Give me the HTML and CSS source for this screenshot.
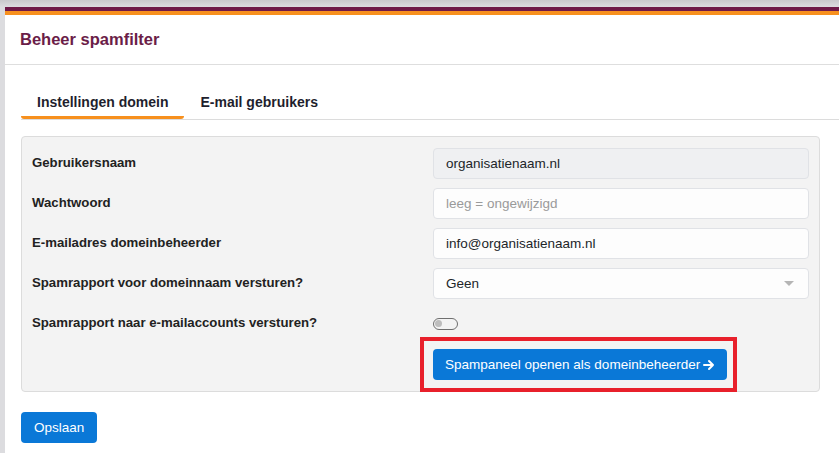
FILE: index.html
```html
<!DOCTYPE html>
<html lang="nl">
<head>
    <meta charset="UTF-8">
    <meta name="viewport" content="width=device-width, initial-scale=1.0">
    <title>Beheer spamfilter</title>
    <link rel="stylesheet" href="styles.css">
</head>
<body>

<div class="topbar"></div>

<div class="page">
    <div class="card">
        <header class="card-header">
            <h1>Beheer spamfilter</h1>
        </header>

        <div class="card-body">
            <ul class="tabs">
                <li class="tab active">Instellingen domein</li>
                <li class="tab">E-mail gebruikers</li>
            </ul>

            <form class="panel">
                <label class="label" for="username">Gebruikersnaam</label>
                <input class="input" id="username" type="text" value="organisatienaam.nl" disabled>

                <label class="label" for="password">Wachtwoord</label>
                <input class="input" id="password" type="password" placeholder="leeg = ongewijzigd">

                <label class="label" for="email">E-mailadres domeinbeheerder</label>
                <input class="input" id="email" type="text" value="info@organisatienaam.nl">

                <label class="label" for="report">Spamrapport voor domeinnaam versturen?</label>
                <div class="select">
                    <span>Geen</span>
                    <span class="caret"></span>
                </div>

                <label class="label" for="accounts">Spamrapport naar e-mailaccounts versturen?</label>
                <div class="toggle-cell">
                    <span class="toggle"><span class="knob"></span></span>
                </div>

                <div></div>
                <div class="button-cell">
                    <span class="highlight">
                        <button type="button" class="btn">
                            Spampaneel openen als domeinbeheerder
                            <svg width="12" height="12" viewBox="0 0 12 12" aria-hidden="true">
                                <path d="M1 6h9M6 2l4 4-4 4" fill="none" stroke="#fff" stroke-width="2" stroke-linecap="round" stroke-linejoin="round"/>
                            </svg>
                        </button>
                    </span>
                </div>
            </form>

            <button type="button" class="btn save">Opslaan</button>
        </div>
    </div>
</div>

</body>
</html>
```

FILE: styles.css
```css
body {
    margin: 0;
    padding: 0;
    background-color: #dcdcdf;
    font-family: "Liberation Sans", Arial, sans-serif;
    color: #212529;
    overflow: hidden;
}

.topbar {
    height: 7px;
    background: linear-gradient(#c9c9cc, #dcdcdf);
}

.page {
    padding-left: 5px;
}

.card {
    background-color: #ffffff;
    border-top: 4px solid #6f1a48;
    min-height: 446px;
}

.card-header {
    border-top: 4px solid #f7901e;
    border-bottom: 1px solid #dedede;
    height: 49px;
    display: flex;
    align-items: center;
    padding-left: 15px;
}

.card-header h1 {
    margin: 0;
    font-size: 16.5px;
    font-weight: bold;
    color: #6b1d48;
}

.card-body {
    padding: 17px 19px 0 16px;
}

/* Tabs */
.tabs {
    list-style: none;
    margin: 0 -19px 0 0;
    padding: 0;
    display: flex;
    border-bottom: 1px solid #dcdcdc;
}

.tab {
    font-size: 14px;
    font-weight: bold;
    line-height: 20px;
    padding: 10px 16px 4px;
    border-bottom: 3px solid transparent;
    color: #1f1f2e;
}

.tab.active {
    border-bottom-color: #f7901e;
    border-radius: 3px;
}

/* Form panel */
.panel {
    margin-top: 16px;
    background-color: #f3f3f3;
    border: 1px solid #dcdcdc;
    border-radius: 4px;
    padding: 11px 10px 11px 10px;
    display: grid;
    grid-template-columns: 401px 1fr;
    row-gap: 9px;
    align-items: center;
}

.label {
    font-size: 13.2px;
    font-weight: bold;
    color: #222;
    margin-top: -2px;
}

.input,
.select {
    box-sizing: border-box;
    height: 31px;
    width: 100%;
    border: 1px solid #e0e2e6;
    border-radius: 4px;
    background-color: #fdfdfd;
    padding: 0 12px;
    font-family: "Liberation Sans", Arial, sans-serif;
    font-size: 13.5px;
    color: #212529;
}

.input:disabled {
    background-color: #eff0f2;
    color: #212529;
}

.input::placeholder {
    color: #9a9a9a;
}

.select {
    display: flex;
    align-items: center;
    justify-content: space-between;
}

.caret {
    width: 0;
    height: 0;
    border-left: 5px solid transparent;
    border-right: 5px solid transparent;
    border-top: 5px solid #b5b5b5;
    margin-right: 2px;
}

.toggle-cell {
    height: 31px;
    display: flex;
    align-items: center;
}

.toggle {
    box-sizing: border-box;
    width: 25px;
    height: 12px;
    border: 1.5px solid #6f6f6f;
    border-radius: 6px;
    display: flex;
    align-items: center;
    padding-left: 1px;
}

.knob {
    width: 7px;
    height: 7px;
    border-radius: 50%;
    background-color: #bdbdbd;
}

.button-cell {
    padding-top: 1px;
}

/* Red annotation frame round the panel button */
.highlight {
    position: relative;
    display: inline-block;
    vertical-align: top;
}

.highlight::after {
    content: "";
    position: absolute;
    top: -12px;
    left: -13px;
    right: -10px;
    bottom: -12px;
    border: 4px solid #e8202b;
    pointer-events: none;
}

/* Buttons */
.btn {
    height: 31px;
    padding: 0 12px;
    border: none;
    border-radius: 4px;
    background-color: #0a78d7;
    color: #ffffff;
    font-family: "Liberation Sans", Arial, sans-serif;
    font-size: 13.5px;
    display: inline-flex;
    align-items: center;
    gap: 3px;
    cursor: pointer;
    vertical-align: top;
}

.save {
    margin-top: 20px;
    padding: 0 13px;
}
```
